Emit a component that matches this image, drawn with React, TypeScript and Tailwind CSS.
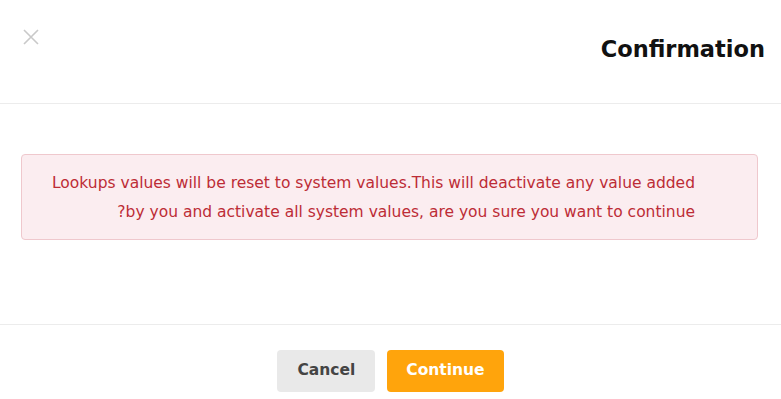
import { useState } from "react";

const CloseIcon = () => (
  <svg width="16" height="16" viewBox="0 0 16 16" fill="none">
    <path d="M1 1L15 15M15 1L1 15" stroke="#c9c9c9" strokeWidth="1.6" />
  </svg>
);

const App = () => {
  const [open, setOpen] = useState(true);

  if (!open) return null;

  return (
    <div
      dir="rtl"
      className="w-[781px] h-[399px] bg-white text-[#111] font-['DejaVu_Sans',sans-serif]"
    >
      {/* header */}
      <div className="flex justify-between items-start h-[104px] border-b border-[#ececec]">
        <h2 className="pr-[16px] pt-[32px] text-[22.5px] leading-[34px] font-bold">
          Confirmation
        </h2>
        <button
          className="ml-[23px] mt-[29px] bg-transparent border-none"
          onClick={() => setOpen(false)}
        >
          <CloseIcon />
        </button>
      </div>

      {/* body */}
      <div className="pt-[50px] pb-[84px] pl-[21px] pr-[23px]">
        <div className="border border-[#efc8cd] bg-[#fbedf0] rounded-[4px] pt-[14px] pb-[12px] pr-[62px] pl-[22px]">
          <p className="text-[15.5px] leading-[29px] text-[#bd2c36]">
            Lookups values will be reset to system values.This will deactivate any value added by you and activate all system values, are you sure you want to continue?
          </p>
        </div>
      </div>

      {/* footer */}
      <div className="flex justify-center gap-[12px] border-t border-[#ececec] pt-[25px]">
        <button className="h-[42px] px-[19px] rounded-[4px] bg-[#ffa40c] text-white text-[15.5px] font-bold">
          Continue
        </button>
        <button
          className="h-[42px] px-[20px] rounded-[4px] bg-[#e9e9e9] text-[#444] text-[15.5px] font-bold"
          onClick={() => setOpen(false)}
        >
          Cancel
        </button>
      </div>
    </div>
  );
};

export default App;
